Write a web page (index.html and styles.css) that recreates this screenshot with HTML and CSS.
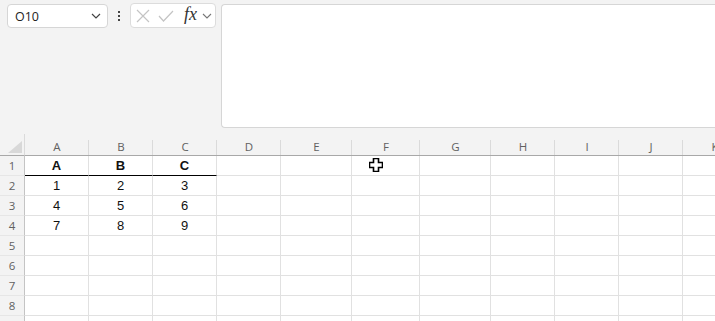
FILE: index.html
```html
<!DOCTYPE html>
<html lang="en">
<head>
    <meta charset="UTF-8">
    <title>Book1 - Sheet1</title>
    <link rel="stylesheet" href="styles.css">
</head>
<body>
    <!-- Name box + formula bar -->
    <div class="formula-bar">
        <div class="name-box">
            <span>O10</span>
            <svg class="chevron" width="10" height="6" viewBox="0 0 10 6"><path d="M1 1 L5 5 L9 1" fill="none" stroke="#444" stroke-width="1.2"/></svg>
        </div>
        <div class="dots"><i></i><i></i><i></i></div>
        <div class="fx-box">
            <svg width="14" height="14" viewBox="0 0 14 14"><path d="M1 1 L13 13 M13 1 L1 13" stroke="#c4c4c4" stroke-width="1.2"/></svg>
            <svg width="16" height="14" viewBox="0 0 16 14"><path d="M1 7 L5.5 12 L15 2" fill="none" stroke="#c4c4c4" stroke-width="1.2"/></svg>
            <span class="fx">fx</span>
            <svg width="10" height="6" viewBox="0 0 10 6"><path d="M1 1 L5 5 L9 1" fill="none" stroke="#777" stroke-width="1.1"/></svg>
        </div>
        <div class="formula-input"></div>
    </div>

    <!-- Sheet grid -->
    <div class="sheet">
        <div class="row head-row">
            <div class="rh corner">
                <svg width="14" height="12" viewBox="0 0 14 12"><path d="M14 0 L14 12 L0 12 Z" fill="#d8d8d8"/></svg>
            </div>
            <div class="ch">A</div>
            <div class="ch">B</div>
            <div class="ch">C</div>
            <div class="ch">D</div>
            <div class="ch w71">E</div>
            <div class="ch w68">F</div>
            <div class="ch w71">G</div>
            <div class="ch">H</div>
            <div class="ch">I</div>
            <div class="ch">J</div>
            <div class="ch">K</div>
        </div>

        <div class="row">
            <div class="rh">1</div>
            <div class="cell bold under">A</div>
            <div class="cell bold under">B</div>
            <div class="cell bold under">C</div>
            <div class="cell"></div>
            <div class="cell w71"></div>
            <div class="cell w68 has-cursor">
                <svg class="cursor" width="14" height="14" viewBox="0 0 14 14"><path d="M4.5 0.5 H9.5 V4.5 H13.5 V9.5 H9.5 V13.5 H4.5 V9.5 H0.5 V4.5 H4.5 Z" fill="#fff" stroke="#000" stroke-width="1.6"/></svg>
            </div>
            <div class="cell w71"></div>
            <div class="cell"></div>
            <div class="cell"></div>
            <div class="cell"></div>
            <div class="cell"></div>
        </div>
        <div class="row">
            <div class="rh">2</div>
            <div class="cell">1</div><div class="cell">2</div><div class="cell">3</div>
            <div class="cell"></div><div class="cell w71"></div><div class="cell w68"></div><div class="cell w71"></div>
            <div class="cell"></div><div class="cell"></div><div class="cell"></div><div class="cell"></div>
        </div>
        <div class="row">
            <div class="rh">3</div>
            <div class="cell">4</div><div class="cell">5</div><div class="cell">6</div>
            <div class="cell"></div><div class="cell w71"></div><div class="cell w68"></div><div class="cell w71"></div>
            <div class="cell"></div><div class="cell"></div><div class="cell"></div><div class="cell"></div>
        </div>
        <div class="row">
            <div class="rh">4</div>
            <div class="cell">7</div><div class="cell">8</div><div class="cell">9</div>
            <div class="cell"></div><div class="cell w71"></div><div class="cell w68"></div><div class="cell w71"></div>
            <div class="cell"></div><div class="cell"></div><div class="cell"></div><div class="cell"></div>
        </div>
        <div class="row">
            <div class="rh">5</div>
            <div class="cell"></div><div class="cell"></div><div class="cell"></div>
            <div class="cell"></div><div class="cell w71"></div><div class="cell w68"></div><div class="cell w71"></div>
            <div class="cell"></div><div class="cell"></div><div class="cell"></div><div class="cell"></div>
        </div>
        <div class="row">
            <div class="rh">6</div>
            <div class="cell"></div><div class="cell"></div><div class="cell"></div>
            <div class="cell"></div><div class="cell w71"></div><div class="cell w68"></div><div class="cell w71"></div>
            <div class="cell"></div><div class="cell"></div><div class="cell"></div><div class="cell"></div>
        </div>
        <div class="row">
            <div class="rh">7</div>
            <div class="cell"></div><div class="cell"></div><div class="cell"></div>
            <div class="cell"></div><div class="cell w71"></div><div class="cell w68"></div><div class="cell w71"></div>
            <div class="cell"></div><div class="cell"></div><div class="cell"></div><div class="cell"></div>
        </div>
        <div class="row">
            <div class="rh">8</div>
            <div class="cell"></div><div class="cell"></div><div class="cell"></div>
            <div class="cell"></div><div class="cell w71"></div><div class="cell w68"></div><div class="cell w71"></div>
            <div class="cell"></div><div class="cell"></div><div class="cell"></div><div class="cell"></div>
        </div>
        <div class="row">
            <div class="rh"></div>
            <div class="cell"></div><div class="cell"></div><div class="cell"></div>
            <div class="cell"></div><div class="cell w71"></div><div class="cell w68"></div><div class="cell w71"></div>
            <div class="cell"></div><div class="cell"></div><div class="cell"></div><div class="cell"></div>
        </div>
    </div>
</body>
</html>
```

FILE: styles.css
```css
/* General */
body {
    margin: 0;
    background-color: #f3f3f3;
    font-family: "Liberation Sans", Arial, sans-serif;
    overflow: hidden;
}

/* Formula bar */
.formula-bar {
    display: flex;
    align-items: flex-start;
    padding: 4px 0 0 7px;
    height: 134px;
    box-sizing: border-box;
}

.name-box {
    width: 101px;
    height: 24px;
    box-sizing: border-box;
    background-color: white;
    border: 1px solid #d6d6d6;
    border-radius: 4px;
    display: flex;
    align-items: center;
    justify-content: space-between;
    padding: 0 6px 0 7px;
    font-family: "Open Sans", sans-serif;
    font-size: 12.5px;
    color: #222;
}

.dots {
    width: 22px;
    height: 24px;
    display: flex;
    flex-direction: column;
    align-items: center;
    justify-content: center;
    gap: 2px;
}

.dots i {
    width: 2px;
    height: 2px;
    background-color: #444;
}

.fx-box {
    width: 86px;
    height: 25px;
    margin-top: -1px;
    box-sizing: border-box;
    background-color: white;
    border: 1px solid #dcdcdc;
    border-radius: 4px;
    display: flex;
    align-items: center;
    gap: 8px;
    padding-left: 5px;
}

.fx-box .fx {
    font-family: "Liberation Serif", serif;
    font-style: italic;
    font-size: 18px;
    color: #333;
    margin-left: 2px;
    margin-right: -3px;
    padding-bottom: 2px;
}

.formula-input {
    flex: 1;
    height: 124px;
    margin-left: 5px;
    background-color: white;
    border: 1px solid #d6d6d6;
    border-right: none;
    border-radius: 4px 0 0 4px;
    box-sizing: border-box;
}

/* Sheet */
.sheet {
    width: 760px;
}

.row {
    display: flex;
    height: 20px;
}

.head-row {
    height: 22px;
}

.rh {
    width: 25px;
    flex: none;
    box-sizing: border-box;
    border-right: 1px solid #c4c4c4;
    border-bottom: 1px solid #e6e6e6;
    font-family: "Open Sans", sans-serif;
    font-size: 11.5px;
    color: #616161;
    display: flex;
    align-items: center;
    justify-content: center;
}

.corner {
    border-bottom: 1px solid #a8a8a8;
    align-items: flex-end;
    justify-content: flex-start;
    padding: 0 0 2px 8px;
    border-right-color: #dadada;
}

.ch {
    width: 64px;
    flex: none;
    box-sizing: border-box;
    border-bottom: 1px solid #a8a8a8;
    background: linear-gradient(#dadada, #dadada) right bottom / 1px 15px no-repeat;
    font-family: "Open Sans", sans-serif;
    font-size: 11.5px;
    color: #616161;
    display: flex;
    align-items: center;
    justify-content: center;
    padding-top: 3px;
}

.cell {
    width: 64px;
    flex: none;
    box-sizing: border-box;
    background-color: white;
    border-right: 1px solid #e1e1e1;
    border-bottom: 1px solid #e1e1e1;
    font-size: 13px;
    color: #111;
    display: flex;
    align-items: center;
    justify-content: center;
}

.w71 { width: 71px; }
.w68 { width: 68px; }

.bold {
    font-weight: bold;
}

.under {
    border-bottom-color: #000;
}

/* mouse pointer sitting over F1 */
.has-cursor {
    position: relative;
}

.cursor {
    position: absolute;
    left: 17px;
    top: 2px;
}
```
